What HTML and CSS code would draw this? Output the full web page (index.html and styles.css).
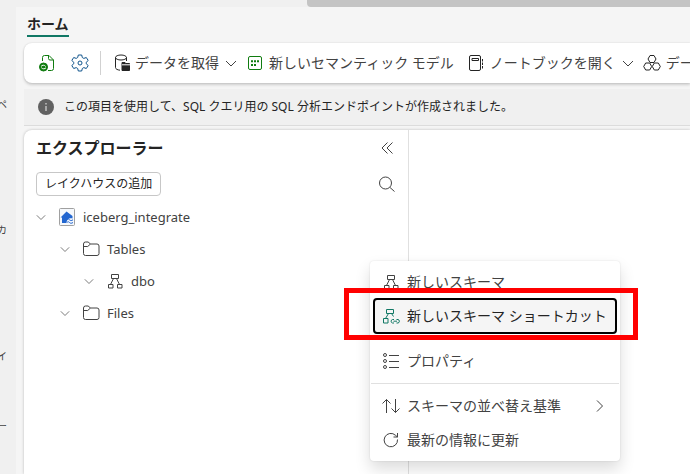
FILE: index.html
```html
<!DOCTYPE html>
<html lang="ja">
<head>
  <meta charset="UTF-8" />
  <title>iceberg_integrate</title>
  <meta name="viewport" content="width=device-width, initial-scale=1" />
  <link rel="stylesheet" href="styles.css">
</head>
<body>
  <!-- shared icons -->
  <svg class="sprite" aria-hidden="true">
    <symbol id="chevron" viewBox="0 0 12 12"><path d="M1 4 6 9 11 4"/></symbol>
    <symbol id="folder" viewBox="0 0 20 20"><path d="M2.500 5a2 2 0 0 1 2-2h2.600l2.400 2h6.500a2 2 0 0 1 2 2v7.500a2 2 0 0 1-2 2H4.500a2 2 0 0 1-2-2zM2.500 7.500h4.200L9.500 5"/></symbol>
    <symbol id="schema" viewBox="0 0 20 20"><path d="M6.500 3.500h7v4h-7zM3.500 13.500H8V17H3.500zM12.500 13.500H17V17h-4.500zM8.500 7.500l-3 6M11.500 7.500l3 6"/></symbol>
  </svg>

  <div class="scroll-strip"><div class="scroll-thumb"></div></div>

  <div class="app">
    <nav class="rail">
      <span>ペ</span>
      <span>カ</span>
      <span>イ</span>
      <span class="last">ー</span>
    </nav>

    <main class="main">
      <div class="tabs">
        <button class="tab">ホーム</button>
      </div>

      <div class="toolbar">
        <div class="icon-group">
          <button class="icon-btn" aria-label="更新">
            <svg class="icon green" viewBox="0 0 20 20"><path d="M6.500 8V4.500a2 2 0 0 1 2-2H13l4.500 4.500v8.500a2 2 0 0 1-2 2H12M12.500 2.500v3A1.500 1.500 0 0 0 14 7h3.500"/><circle class="fill" cx="7.500" cy="14" r="4"/><path class="white" d="M5 13.500c1-1.700 3.500-1.700 4.700 0M10 14.700c-1 1.500-3.500 1.500-4.700 0"/></svg>
          </button>
          <button class="icon-btn" aria-label="設定">
            <svg class="icon blue" viewBox="0 0 20 20"><path d="M8.300 2h3.400l.6 2.500 1.500.9 2.500-.9 1.900 3-2 1.800v1.400l2 1.800-1.900 3-2.500-.9-1.500.9-.6 2.500H8.300l-.6-2.500-1.500-.9-2.500.9-1.900-3 2-1.800V9.300l-2-1.800 1.900-3 2.500.9 1.500-.9z"/><circle cx="10" cy="10" r="2"/></svg>
          </button>
        </div>
        <div class="separator"></div>
        <button class="tool">
          <svg class="icon dark" viewBox="0 0 20 20"><ellipse cx="10" cy="4.500" rx="5.500" ry="2.500"/><path d="M4.500 4.500v10c0 1.500 2 2.500 4.500 2.700M15.500 4.500V8"/><path class="fill" d="M11 11V9.500h3l1 1h3.500v7H11z"/><path class="white" d="M11 11.800h8"/></svg>
          <span>データを取得</span>
          <svg class="chev"><use href="#chevron"/></svg>
        </button>
        <button class="tool plain">
          <svg class="icon green" viewBox="0 0 20 20"><rect x="3.500" y="3.500" width="13" height="13" rx="1.500"/><path class="dots" d="M6 8.200h8.500M6 12h6"/></svg>
          <span>新しいセマンティック モデル</span>
        </button>
        <button class="tool">
          <svg class="icon dark" viewBox="0 0 20 20"><rect x="3.500" y="2.500" width="11" height="15" rx="1.500"/><path d="M6 5.500h6.500v2H6z"/><path d="M16.500 6v2.500M16.500 9.500V12M16.500 13v2.500"/></svg>
          <span>ノートブックを開く</span>
          <svg class="chev"><use href="#chevron"/></svg>
        </button>
        <button class="tool">
          <svg class="icon dark" viewBox="0 0 20 20"><path d="M8 2.500h4L14 6l-2 3.500H8L6 6zM3.700 10h4l2 3.500-2 3.500h-4l-2-3.500zM12.300 10h4l2 3.500-2 3.500h-4l-2-3.500z"/></svg>
          <span>データ</span>
        </button>
      </div>

      <div class="message" role="status">
        <svg class="info" viewBox="0 0 16 16"><circle cx="8" cy="8" r="8"/><path d="M8 7v5M8 4v1.500"/></svg>
        <span>この項目を使用して、SQL クエリ用の SQL 分析エンドポイントが作成されました。</span>
      </div>

      <div class="workspace">
        <section class="explorer">
          <header class="explorer-head">
            <h1>エクスプローラー</h1>
            <button class="icon-btn" aria-label="折りたたむ">
              <svg class="icon gray" viewBox="0 0 20 20"><path d="M10.500 4.500 5 10l5.500 5.500M15.500 4.500 10 10l5.500 5.500"/></svg>
            </button>
          </header>
          <div class="explorer-actions">
            <button class="add-btn">レイクハウスの追加</button>
            <button class="icon-btn" aria-label="検索">
              <svg class="icon gray" viewBox="0 0 20 20"><circle cx="8.500" cy="9" r="6"/><path d="m13 13.500 4.500 4"/></svg>
            </button>
          </div>
          <ul class="tree">
            <li class="level-1">
              <svg class="chev"><use href="#chevron"/></svg>
              <svg class="icon" viewBox="0 0 20 20"><rect class="lake-box" x="2.500" y="1.500" width="15" height="17" rx="1"/><path class="lake-house" d="m9.500 4.500 6 4.500v2.500c-3-1-6 .500-6 4.500H5v-5.500H3.500z"/><path class="lake-wave" d="M10 12.800c1-1 1.500-1 2.500 0s2 1 3.500 0M10 15.500c1-1 1.500-1 2.500 0s2 1 3.500 0"/></svg>
              <span>iceberg_integrate</span>
            </li>
            <li class="level-2">
              <svg class="chev"><use href="#chevron"/></svg>
              <svg class="icon"><use href="#folder"/></svg>
              <span>Tables</span>
            </li>
            <li class="level-3">
              <svg class="chev"><use href="#chevron"/></svg>
              <svg class="icon"><use href="#schema"/></svg>
              <span>dbo</span>
            </li>
            <li class="level-2">
              <svg class="chev"><use href="#chevron"/></svg>
              <svg class="icon"><use href="#folder"/></svg>
              <span>Files</span>
            </li>
          </ul>
        </section>
        <section class="canvas"></section>
      </div>
    </main>
  </div>

  <div class="menu" role="menu">
    <button class="menu-item" role="menuitem">
      <svg class="icon"><use href="#schema"/></svg>
      <span>新しいスキーマ</span>
    </button>
    <button class="menu-item selected" role="menuitem">
      <svg class="icon teal" viewBox="0 0 20 20"><path d="M5.500 3.500h7v4h-7zM2.500 12.500H7V17H2.500zM7.500 7.500l-3 5M10.500 7.500l2 3"/><path d="M13 13.500h-1.500a1.800 1.800 0 0 0 0 3.500H13M15.500 13.500H17a1.800 1.800 0 0 1 0 3.500h-1.500M12.500 15.200H16"/></svg>
      <span>新しいスキーマ ショートカット</span>
    </button>
    <hr>
    <button class="menu-item" role="menuitem">
      <svg class="icon" viewBox="0 0 20 20"><circle cx="4" cy="4" r="1.500"/><circle cx="4" cy="10" r="1.500"/><circle cx="4" cy="16" r="1.500"/><path d="M8 4.500h10M8 10.500h10M8 16.500h10"/></svg>
      <span>プロパティ</span>
    </button>
    <hr>
    <button class="menu-item" role="menuitem">
      <svg class="icon" viewBox="0 0 20 20"><path d="M5.500 17V3.500M1.500 7.500l4-4 4 4M14.500 3v13.500M10.500 12.500l4 4 4-4"/></svg>
      <span>スキーマの並べ替え基準</span>
      <svg class="arrow" viewBox="0 0 12 12"><path d="M3 .5 8.500 6 3 11.500"/></svg>
    </button>
    <button class="menu-item" role="menuitem">
      <svg class="icon" viewBox="0 0 20 20"><path d="M16.500 9.500a6.700 6.700 0 1 1-2-4.200l2 1.700M16.500 3v4h-4"/></svg>
      <span>最新の情報に更新</span>
    </button>
  </div>
</body>
</html>
```
FILE: styles.css
```css
* { box-sizing: border-box; }

body {
  margin: 0;
  height: 100vh;
  overflow: hidden;
  display: flex;
  flex-direction: column;
  background: #f5f5f5;
  color: #424242;
  font-family: "Noto Sans", "Noto Sans CJK JP", sans-serif;
  font-size: 14px;
  line-height: 20px;
}

button {
  font: inherit;
  color: inherit;
  background: none;
  border: none;
  padding: 0;
  white-space: nowrap;
}

svg {
  display: block;
  flex: none;
  fill: none;
  stroke: currentColor;
}

.sprite {
  position: absolute;
  width: 0;
  height: 0;
}

.icon {
  width: 20px;
  height: 20px;
}

.chev,
.arrow {
  width: 12px;
  height: 12px;
}

.green { color: #107c10; }
.blue { color: #0f548c; }
.dark { color: #242424; }
.gray { color: #424242; }
.teal { color: #117865; }
.fill { fill: currentColor; }
.white { stroke: #fff; }
.dots {
  stroke-width: 2;
  stroke-dasharray: 2 1;
}

.scroll-strip {
  flex: none;
  height: 7px;
  background: #f0f0f0;
}

.scroll-thumb {
  height: 7px;
  margin-left: 307px;
  background: #c4c4c4;
  border-bottom-left-radius: 4px;
}

.app {
  flex: 1;
  min-height: 0;
  display: flex;
}

/* left rail */
.rail {
  flex: none;
  width: 16px;
  padding-top: 34px;
  background: #f0f0f0;
  overflow: hidden;
  display: flex;
  flex-direction: column;
  align-items: flex-start;
}

.rail span {
  flex: none;
  width: 7px;
  height: 126px;
  display: flex;
  align-items: center;
  justify-content: flex-end;
  font-size: 10px;
}

.rail .last { height: 14px; }

.main {
  flex: 1;
  min-width: 0;
  padding-left: 8px;
  display: flex;
  flex-direction: column;
}

.tabs {
  padding: 5px 3px 6px;
}

.tab {
  display: block;
  height: 25px;
  border-bottom: 2px solid #117865;
  color: #242424;
  font-weight: 700;
}

/* toolbar */
.toolbar {
  flex: none;
  height: 40px;
  padding-left: 12px;
  background: #fff;
  border-radius: 8px 0 0 8px;
  box-shadow: 0 0 2px rgba(0,0,0,0.14), 0 2px 3px rgba(0,0,0,0.16);
  display: flex;
  align-items: center;
  gap: 8px;
}

.icon-group {
  display: flex;
  gap: 14px;
}

.separator {
  flex: none;
  width: 1px;
  height: 24px;
  margin: 0 2px;
  background: #d1d1d1;
}

.tool {
  flex: none;
  display: flex;
  align-items: center;
  gap: 4px;
}

.tool .chev { margin-left: 2px; }
.tool.plain { padding-right: 4px; }

.message {
  height: 37px;
  margin-top: 6px;
  padding-left: 14px;
  background: #f0f0f0;
  border-bottom: 1px solid #dcdcdc;
  color: #242424;
  font-size: 12px;
  white-space: nowrap;
  display: flex;
  align-items: center;
  gap: 10px;
}

.info {
  width: 16px;
  height: 16px;
}

.info circle {
  fill: #616161;
  stroke: none;
}

.info path { stroke: #f0f0f0; }

/* explorer */
.workspace {
  flex: 1;
  min-height: 0;
  margin-top: 4px;
  background: #fff;
  border-top-left-radius: 8px;
  box-shadow: 0 0 3px rgba(0,0,0,0.24);
  display: flex;
}

.explorer {
  flex: none;
  width: 385px;
  padding: 8px 11px 8px 12px;
  border-right: 1px solid #e0e0e0;
}

.canvas { flex: 1; }

.explorer-head,
.explorer-actions {
  display: flex;
  align-items: center;
  justify-content: space-between;
}

.explorer-head { margin-bottom: 14px; }

h1 {
  margin: 0;
  color: #242424;
  font-size: 16px;
  line-height: 20px;
  font-weight: 700;
}

.add-btn {
  height: 24px;
  padding: 0 8px;
  border: 1px solid #c7c7c7;
  border-radius: 4px;
  color: #242424;
  font-size: 12px;
}

.tree {
  list-style: none;
  margin: 5px 0 0;
  padding: 0;
  font-size: 13px;
}

.tree li {
  height: 32px;
  display: flex;
  align-items: center;
}

.tree .chev {
  width: 10px;
  height: 10px;
  margin-right: 11px;
  color: #616161;
}

.tree .icon { margin-right: 6px; }

.tree .level-2 { padding-left: 24px; }
.tree .level-3 { padding-left: 48px; }

.lake-box {
  fill: #f5f8fc;
  stroke: #a0a0a0;
}

.lake-house {
  fill: #2266d0;
  stroke: none;
}

.lake-wave { stroke: #2266d0; }

/* context menu */
.menu {
  position: absolute;
  left: 370px;
  top: 261px;
  width: 250px;
  padding: 4px;
  background: #fff;
  border-radius: 4px;
  box-shadow: 0 0 2px rgba(0,0,0,0.12), 0 8px 16px rgba(0,0,0,0.14);
}

.menu-item {
  width: 100%;
  height: 34px;
  padding: 0 10px 0 7px;
  display: flex;
  align-items: center;
  gap: 6px;
}

.menu hr {
  height: 1px;
  margin: 5px -3px;
  border: none;
  background: #e0e0e0;
}

.arrow { margin-left: auto; }

.selected {
  position: relative;
  background: #f5f5f5;
  border-radius: 3px;
  color: #242424;
  outline: 2px solid #000;
  outline-offset: -1px;
}

/* red highlight around the selected command */
.selected::after {
  content: "";
  position: absolute;
  top: -11px;
  right: -22px;
  bottom: -7px;
  left: -30px;
  border: 5px solid #f00;
}
```
